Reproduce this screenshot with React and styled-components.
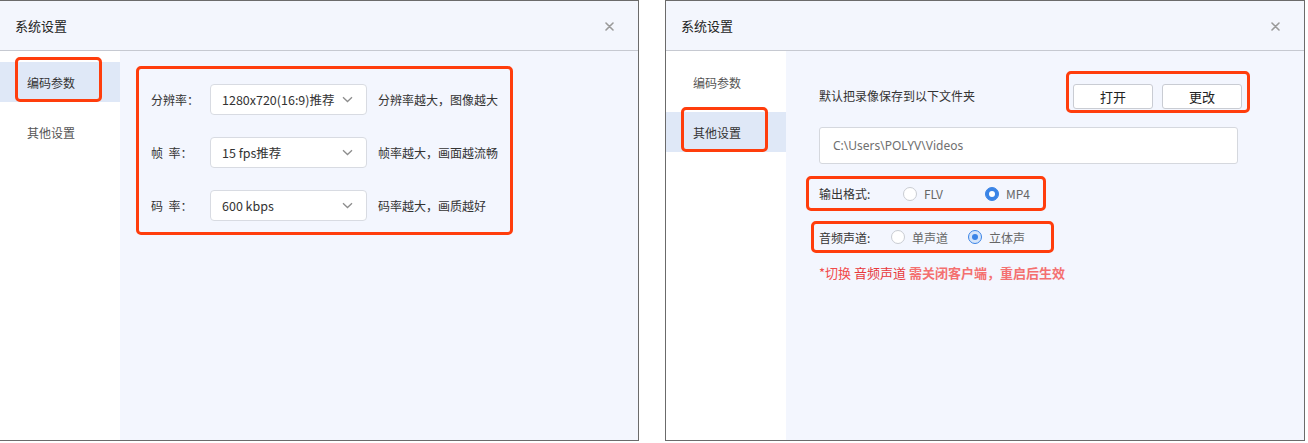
import React from 'react';
import styled, { createGlobalStyle } from 'styled-components';

const GlobalStyle = createGlobalStyle`
  html, body {
    margin: 0;
    padding: 0;
    background: #fff;
  }
  body {
    font-family: "Microsoft YaHei", "Noto Sans CJK SC", "Noto Sans", sans-serif;
    color: #333;
  }
`;

const RED = '#ff3d0c';

const Page = styled.div`
  display: flex;
  gap: 26px;
  width: 1308px;
  height: 443px;
`;

const Panel = styled.div`
  width: ${p => p.$width}px;
  height: 441px;
  box-sizing: border-box;
  display: flex;
  flex-direction: column;
  border: 1px solid #6b6b6b;
  border-left: ${p => (p.$noLeft ? 'none' : '1px solid #6b6b6b')};
  background: #f3f6fe;
`;

const Header = styled.div`
  height: 49px;
  flex: none;
  display: flex;
  align-items: center;
  justify-content: space-between;
  padding: 0 24px 0 15px;
  background: #f3f6fd;
  border-bottom: 1px solid #c6c9d1;
  font-size: 13px;
  color: #222;
`;

const Close = styled.svg`
  width: 9px;
  height: 9px;
  margin-top: 1px;
`;

const Body = styled.div`
  flex: 1;
  display: flex;
  min-height: 0;
`;

const Sidebar = styled.div`
  width: 120px;
  flex: none;
  background: #fff;
  padding-top: 11px;
  display: flex;
  flex-direction: column;
  gap: 10px;
`;

const NavItem = styled.div`
  position: relative;
  height: 40px;
  display: flex;
  align-items: center;
  padding-left: 27px;
  font-size: 12px;
  color: ${p => (p.$active ? '#333' : '#555')};
  background: ${p => (p.$active ? '#dfe8f7' : 'transparent')};
`;

const NavMark = styled.div`
  position: absolute;
  left: 15px;
  top: -5px;
  width: 87px;
  height: 45px;
  box-sizing: border-box;
  border: 3px solid ${RED};
  border-radius: 5px;
`;

const Content = styled.div`
  flex: 1;
  padding: ${p => p.$pad};
`;

const MarkBox = styled.div`
  box-sizing: border-box;
  border: 3px solid ${RED};
  border-radius: 5px;
`;

const FormBox = styled(MarkBox)`
  width: 377px;
  padding: 15px 0 11px 12px;
  display: flex;
  flex-direction: column;
  gap: 22px;
`;

const FormRow = styled.div`
  display: flex;
  align-items: center;
  height: 31px;
`;

const Label = styled.div`
  width: ${p => p.$w}px;
  flex: none;
  font-size: 12px;
  color: #333;
  white-space: pre;
`;

const Select = styled.div`
  width: 157px;
  height: 31px;
  box-sizing: border-box;
  flex: none;
  display: flex;
  align-items: center;
  justify-content: space-between;
  padding: 0 13px 0 11px;
  background: #fff;
  border: 1px solid #d8dbe2;
  border-radius: 4px;
  font-size: 12.5px;
  color: #333;
  white-space: nowrap;
`;

const Chevron = styled.svg`
  width: 11px;
  height: 7px;
  flex: none;
`;

const Hint = styled.div`
  margin-left: 11px;
  font-size: 12px;
  color: #333;
  white-space: nowrap;
`;

const TopRow = styled.div`
  width: 431px;
  height: 42px;
  display: flex;
  align-items: flex-end;
  justify-content: space-between;
`;

const TopText = styled.div`
  font-size: 12px;
  line-height: 20px;
  color: #333;
  padding-bottom: 7px;
`;

const ButtonBox = styled(MarkBox)`
  display: flex;
  gap: 9px;
  padding: 10px 5px 1px 4px;
`;

const Button = styled.div`
  width: 80px;
  height: 25px;
  box-sizing: border-box;
  display: flex;
  align-items: center;
  justify-content: center;
  background: #fff;
  border: 1px solid #c9ccd3;
  border-radius: 3px;
  font-size: 13px;
  color: #222;
`;

const PathInput = styled.div`
  margin-top: 14px;
  width: 419px;
  height: 37px;
  box-sizing: border-box;
  display: flex;
  align-items: center;
  padding-left: 13px;
  background: #fff;
  border: 1px solid #d5d8de;
  border-radius: 3px;
  font-size: 12px;
  color: #6f6f6f;
  font-family: "Noto Sans", "Noto Sans CJK SC", sans-serif;
`;

const RadioBox = styled(MarkBox)`
  display: flex;
  align-items: center;
  width: ${p => p.$w}px;
  height: ${p => p.$h}px;
  margin: ${p => p.$m};
  padding-left: ${p => p.$pl}px;
`;

const Option = styled.div`
  width: ${p => p.$w}px;
  flex: none;
  display: flex;
  align-items: center;
  gap: 7px;
  font-size: 12px;
  color: #666;
`;

const Dot = styled.span`
  width: 14px;
  height: 14px;
  box-sizing: border-box;
  border-radius: 50%;
  flex: none;
  display: flex;
  align-items: center;
  justify-content: center;
  border: 1px solid ${p => (p.$on ? '#3a84e6' : '#c9ccd2')};
  background: ${p => (p.$on ? (p.$solid ? '#3a84e6' : '#d5e5fa') : '#fff')};
  &::after {
    content: '';
    display: ${p => (p.$on ? 'block' : 'none')};
    width: 6px;
    height: 6px;
    border-radius: 50%;
    background: ${p => (p.$solid ? '#fff' : '#3a84e6')};
  }
`;

const Note = styled.div`
  margin-top: 10px;
  font-size: 13px;
  line-height: 20px;
  color: #f24b4b;
`;

const NoteKey = styled.span`
  color: #e8383c;
`;

const NoteRest = styled.span`
  color: #f47070;
  font-weight: 600;
`;

const CloseIcon = () => (
  <Close viewBox="0 0 9 9">
    <path d="M1 1L8 8M8 1L1 8" stroke="#9a9a9a" strokeWidth="1.6" strokeLinecap="round" />
  </Close>
);

const Arrow = () => (
  <Chevron viewBox="0 0 11 7">
    <path d="M1 1.2L5.5 5.5L10 1.2" fill="none" stroke="#8d8d8d" strokeWidth="1.3" />
  </Chevron>
);

const rows = [
  { label: '分辨率：', value: '1280x720(16:9)推荐', hint: '分辨率越大，图像越大' },
  { label: '帧  率：', value: '15 fps推荐', hint: '帧率越大，画面越流畅' },
  { label: '码  率：', value: '600 kbps', hint: '码率越大，画质越好' },
];

function Nav({ active }) {
  return (
    <Sidebar>
      {['编码参数', '其他设置'].map((t, i) => (
        <NavItem key={t} $active={i === active}>
          {i === active && <NavMark />}
          {t}
        </NavItem>
      ))}
    </Sidebar>
  );
}

export default function App() {
  return (
    <>
      <GlobalStyle />
      <Page>
        <Panel $width={639} $noLeft>
          <Header>
            系统设置
            <CloseIcon />
          </Header>
          <Body>
            <Nav active={0} />
            <Content $pad="15px 0 0 16px">
              <FormBox>
                {rows.map(r => (
                  <FormRow key={r.label}>
                    <Label $w={59}>{r.label}</Label>
                    <Select>
                      {r.value}
                      <Arrow />
                    </Select>
                    <Hint>{r.hint}</Hint>
                  </FormRow>
                ))}
              </FormBox>
            </Content>
          </Body>
        </Panel>

        <Panel $width={640}>
          <Header>
            系统设置
            <CloseIcon />
          </Header>
          <Body>
            <Nav active={1} />
            <Content $pad="20px 0 0 33px">
              <TopRow>
                <TopText>默认把录像保存到以下文件夹</TopText>
                <ButtonBox>
                  <Button>打开</Button>
                  <Button>更改</Button>
                </ButtonBox>
              </TopRow>
              <PathInput>C:\Users\POLYV\Videos</PathInput>
              <RadioBox $w={240} $h={35} $m="12px 0 0 -13px" $pl={10}>
                <Label $w={84}>输出格式:</Label>
                <Option $w={82}>
                  <Dot />
                  FLV
                </Option>
                <Option $w={50}>
                  <Dot $on $solid />
                  MP4
                </Option>
              </RadioBox>
              <RadioBox $w={243} $h={32} $m="10px 0 0 -8px" $pl={5}>
                <Label $w={72}>音频声道:</Label>
                <Option $w={77}>
                  <Dot />
                  单声道
                </Option>
                <Option $w={60}>
                  <Dot $on />
                  立体声
                </Option>
              </RadioBox>
              <Note>
                *切换 <NoteKey>音频声道</NoteKey> <NoteRest>需关闭客户端，重启后生效</NoteRest>
              </Note>
            </Content>
          </Body>
        </Panel>
      </Page>
    </>
  );
}
